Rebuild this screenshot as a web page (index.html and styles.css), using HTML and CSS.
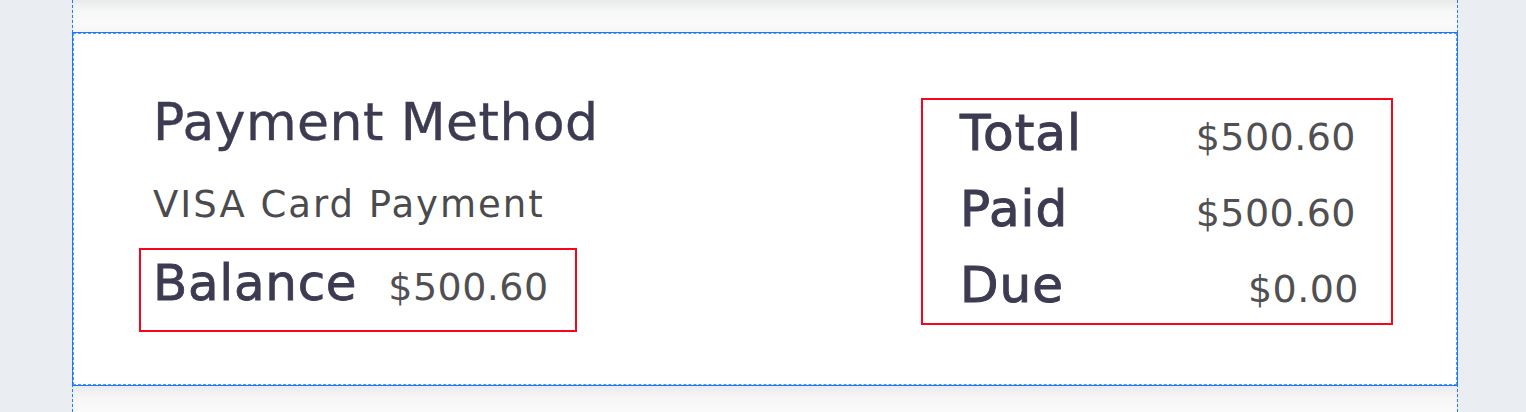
FILE: index.html
```html
<!DOCTYPE html>
<html lang="en">
<head>
<meta charset="utf-8">
<title>Payment Summary</title>
<link rel="stylesheet" href="styles.css">
</head>
<body>
<div class="page">
  <div class="card card-above"></div>
  <section class="card payment selected">
    <div class="method">
      <h2 class="method-title">Payment Method</h2>
      <p class="method-type">VISA Card Payment</p>
      <div class="balance highlight">
        <span class="balance-label">Balance</span>
        <span class="amount">$500.60</span>
      </div>
    </div>
    <div class="totals highlight">
      <div class="totals-row"><span class="totals-label">Total</span><span class="amount">$500.60</span></div>
      <div class="totals-row"><span class="totals-label">Paid</span><span class="amount">$500.60</span></div>
      <div class="totals-row"><span class="totals-label">Due</span><span class="amount amount-due">$0.00</span></div>
    </div>
  </section>
  <div class="card card-below"></div>
</div>
</body>
</html>
```

FILE: styles.css
```css
html, body {
  margin: 0;
  padding: 0;
}

body {
  background: #eaedf2;
  font-family: "DejaVu Sans", "Open Sans", "Liberation Sans", sans-serif;
  color: #3c3b52;
  height: 412px;
  overflow: hidden;
}

.page {
  margin-left: 72px;
  width: 1384px;
  height: 412px;
  border-left: 1px dashed #1f7bff;
  border-right: 1px dashed #1f7bff;
  display: flex;
  flex-direction: column;
}

.card {
  background: #ffffff;
}

.card-above {
  height: 32px;
  flex: none;
  background: linear-gradient(#e9eaeb 0%, #f6f7f7 35%, #fbfbfb 70%, #f5f6f6 100%);
}

.card-below {
  flex: 1;
  margin-top: 1px;
  background: linear-gradient(#ebebeb 0%, #f6f6f6 45%, #fbfbfb 100%);
}

.selected {
  margin-top: 1px;
  border: 1px dashed #4d97ff;
  outline: 1px solid #1a78ff;
}

.payment {
  height: 352px;
  box-sizing: border-box;
  padding: 62px 63px 0 65px;
  display: flex;
  justify-content: space-between;
  align-items: flex-start;
}

.highlight {
  border: 2px solid #f5061c;
}

.method {
  display: flex;
  flex-direction: column;
  align-items: flex-start;
}

.method-title {
  margin: 0 0 0 14px;
  font-size: 52px;
  line-height: 52px;
  font-weight: 400;
  letter-spacing: 0.45px;
  -webkit-text-stroke: 0.4px #3c3b52;
  color: #3c3b52;
}

.method-type {
  margin: 37px 0 0 14px;
  font-size: 37px;
  line-height: 40px;
  font-weight: 400;
  letter-spacing: 2px;
  color: #4b4b4d;
}

.balance {
  margin-top: 23px;
  padding: 5px 26px 19px 12px;
  display: flex;
  align-items: baseline;
  gap: 31px;
}

.balance-label {
  font-size: 50px;
  line-height: 56px;
  font-weight: 400;
  letter-spacing: 0.7px;
  -webkit-text-stroke: 0.8px #3c3b52;
  color: #3c3b52;
}

.amount {
  font-size: 38px;
  line-height: 1;
  font-weight: 400;
  letter-spacing: 0.45px;
  color: #505052;
}

.amount-due {
  margin-right: -3px;
}

.totals {
  margin-top: 2px;
  width: 472px;
  box-sizing: border-box;
  padding: 2px 35px 7px 37px;
  display: flex;
  flex-direction: column;
  gap: 14px;
}

.totals-row {
  display: flex;
  justify-content: space-between;
  align-items: baseline;
}

.totals-label {
  font-size: 50px;
  line-height: 62px;
  font-weight: 400;
  letter-spacing: 1px;
  -webkit-text-stroke: 1px #3c3b52;
  color: #3c3b52;
}
```
